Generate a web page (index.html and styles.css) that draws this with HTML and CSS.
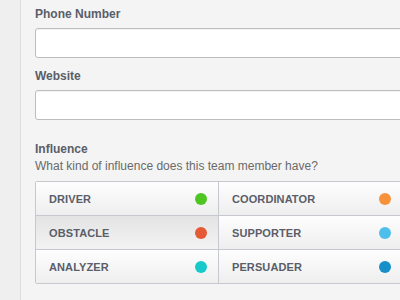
FILE: index.html
```html
<!DOCTYPE html>
<html>
<head>
<meta charset="utf-8">
<link rel="stylesheet" href="styles.css">
</head>
<body>
<div class="page">
  <div class="rail"></div>
  <div class="main">
    <label class="label">Phone Number</label>
    <div class="input"></div>
    <label class="label label-next">Website</label>
    <div class="input"></div>
    <div class="label label-section">Influence</div>
    <div class="hint">What kind of influence does this team member have?</div>
    <div class="grid">
      <div class="cell"><span>DRIVER</span><i class="dot green"></i></div>
      <div class="cell"><span>COORDINATOR</span><i class="dot orange"></i></div>
      <div class="cell pressed"><span>OBSTACLE</span><i class="dot red"></i></div>
      <div class="cell"><span>SUPPORTER</span><i class="dot sky"></i></div>
      <div class="cell"><span>ANALYZER</span><i class="dot teal"></i></div>
      <div class="cell"><span>PERSUADER</span><i class="dot blue"></i></div>
    </div>
  </div>
</div>
</body>
</html>
```
FILE: styles.css
```css
html, body {
  margin: 0;
  padding: 0;
  width: 400px;
  height: 300px;
  overflow: hidden;
  background: #f4f4f4;
  font-family: "Liberation Sans", Arial, sans-serif;
}
.page {
  display: flex;
  width: 420px;
  height: 300px;
}
.rail {
  width: 20px;
  flex: none;
  background: #efefef;
  border-right: 1px solid #dedede;
}
.main {
  flex: none;
  width: 368px;
  padding: 6px 0 0 14px;
  display: flex;
  flex-direction: column;
}
.label {
  display: block;
  font-size: 12px;
  line-height: 16px;
  font-weight: bold;
  color: #5a5e69;
}
.label-next { margin-top: 10px; }
.label-section { margin-top: 21px; }
.input {
  margin-top: 6px;
  height: 28px;
  background: #fff;
  border: 1px solid #bdbdbd;
  border-radius: 3px;
  box-shadow: inset 0 1px 1px rgba(0,0,0,0.05);
}
.hint {
  margin-top: 1px;
  font-size: 12px;
  line-height: 16px;
  color: #6a6a6a;
}
.grid {
  margin-top: 7px;
  display: grid;
  grid-template-columns: 1fr 1fr;
  border: 1px solid #c6c8cf;
  border-radius: 2px;
}
.cell {
  height: 33px;
  display: flex;
  align-items: center;
  justify-content: space-between;
  padding: 0 11px 0 13px;
  background: linear-gradient(#fefefe, #eeeeee);
  border-bottom: 1px solid #c6c8cf;
  font-size: 11px;
  font-weight: bold;
  color: #5a5e69;
  letter-spacing: 0.1px;
}
.cell:nth-child(odd) { border-right: 1px solid #c6c8cf; }
.cell:nth-last-child(-n+2) { border-bottom: none; height: 33px; }
.cell.pressed { background: linear-gradient(#e3e3e3, #f3f3f3); }
.dot {
  width: 12px;
  height: 12px;
  border-radius: 50%;
  display: block;
}
.green { background: #4ec521; }
.orange { background: #f8923a; }
.red { background: #e45a34; }
.sky { background: #4dbfea; }
.teal { background: #17c9c9; }
.blue { background: #1590c9; }
```
